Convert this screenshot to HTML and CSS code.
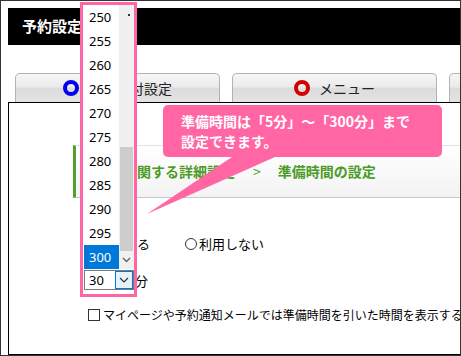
FILE: index.html
```html
<!DOCTYPE html>
<html lang="ja">
<head>
  <meta charset="UTF-8" />
  <meta name="viewport" content="width=device-width, initial-scale=1.0" />
  <title>予約設定</title>
  <link rel="stylesheet" href="styles.css">
</head>
<body>
  <div class="frame">
    <header class="topbar">予約設定</header>

    <nav class="tabs">
      <div class="tab"><span class="ring ring-blue"></span>予約受付設定</div>
      <div class="tab"><span class="ring ring-red"></span>メニュー</div>
      <div class="tab"></div>
    </nav>

    <main class="panel">
      <div class="crumb">
        <span>予約に関する詳細設定</span><span class="sep">&gt;</span><span>準備時間の設定</span>
      </div>

      <div class="radios">
        <label class="opt"><span class="radio"></span>利用する</label>
        <label class="opt opt-off"><span class="radio"></span>利用しない</label>
      </div>

      <div class="time-row">
        <div class="select">
          <span>30</span>
          <span class="select-btn">
            <svg width="10" height="6" viewBox="0 0 10 6"><path d="M1 1 L5 5 L9 1" fill="none" stroke="#333" stroke-width="1.2"/></svg>
          </span>
        </div>
        <span class="unit">分</span>
      </div>

      <div class="check-row">
        <span class="checkbox"></span>マイページや予約通知メールでは準備時間を引いた時間を表示する
      </div>
    </main>

    <!-- open list of the select -->
    <div class="droplist">
      <ul class="options">
        <li>250</li>
        <li>255</li>
        <li>260</li>
        <li>265</li>
        <li>270</li>
        <li>275</li>
        <li>280</li>
        <li>285</li>
        <li>290</li>
        <li>295</li>
        <li class="selected">300</li>
      </ul>
      <div class="scrollbar">
        <span class="scroll-dot"></span>
        <span class="thumb"></span>
        <span class="scroll-down">
          <svg width="9" height="6" viewBox="0 0 9 6"><path d="M1 1 L4.5 4.5 L8 1" fill="none" stroke="#606060" stroke-width="1.3"/></svg>
        </span>
      </div>
    </div>
    <div class="mark"></div>

    <svg class="tail" width="461" height="356" viewBox="0 0 461 356">
      <polygon points="146,213 241.4,149 289.7,149" fill="#ff66a3"/>
    </svg>
    <div class="balloon">準備時間は「5分」～「300分」まで<br>設定できます。</div>
  </div>
</body>
</html>
```

FILE: styles.css
```css
* {
  margin: 0;
  padding: 0;
  box-sizing: border-box;
}

body {
  background: #fff;
  font-family: "Noto Sans", "Noto Sans CJK JP", sans-serif;
  color: #000;
}

.frame {
  position: relative;
  width: 461px;
  height: 356px;
  border: 1px solid #333;
  overflow: hidden;
  display: flex;
  flex-direction: column;
}

.topbar {
  margin: 7px 0 0 7px;
  height: 37px;
  flex: none;
  background: #000;
  color: #fff;
  font-size: 15px;
  font-weight: bold;
  line-height: 37px;
  padding-left: 14px;
  white-space: nowrap;
}

/* tabs */
.tabs {
  display: flex;
  gap: 12px;
  margin-top: 28px;
  padding-left: 14px;
  flex: none;
}

.tab {
  flex: none;
  width: 205px;
  height: 29px;
  border: 1px solid #b2b2b2;
  border-bottom: none;
  border-radius: 5px 5px 0 0;
  background: linear-gradient(#f6f6f6 0%, #ebebeb 45%, #dcdcdc 52%, #e3e3e3 100%);
  display: flex;
  align-items: center;
  justify-content: center;
  gap: 9px;
  font-size: 14px;
  color: #222;
  white-space: nowrap;
}

.ring {
  width: 16px;
  height: 16px;
  border-radius: 50%;
  border: 4px solid;
}

.ring-blue { border-color: #0000f0; }
.ring-red { border-color: #d20000; }

/* main panel */
.panel {
  flex: 1;
  margin-left: 7px;
  border-top: 1px solid #000;
  border-left: 1px solid #000;
  border-bottom: 1px solid #000;
  font-family: "Noto Sans CJK JP", sans-serif;
}

.crumb {
  margin: 42px 0 0 64px;
  height: 53px;
  border-left: 3px solid #55a02a;
  border-top: 1px solid #e2e2e2;
  border-bottom: 1px solid #c8c8c8;
  background: linear-gradient(#ffffff, #f3f3f3);
  padding-left: 19px;
  font-size: 14px;
  font-weight: bold;
  line-height: 51px;
  color: #4b9b26;
  white-space: nowrap;
}

.crumb .sep {
  margin: 0 17px 0 18px;
  font-weight: normal;
}

.radios {
  display: flex;
  margin-top: 36px;
  padding-left: 75px;
  font-size: 13px;
  line-height: 20px;
}

.opt {
  display: flex;
  align-items: center;
  gap: 2px;
}

.opt-off {
  margin-left: 35px;
}

.radio {
  width: 12px;
  height: 12px;
  border: 1px solid #333;
  border-radius: 50%;
  background: #fff;
}

.time-row {
  display: flex;
  align-items: center;
  margin-top: 16px;
  padding-left: 75px;
  font-size: 13px;
}

.select {
  width: 50px;
  height: 20px;
  border: 1px solid #7a7a7a;
  background: #fff;
  display: flex;
  align-items: center;
  justify-content: space-between;
  padding-left: 4px;
  font-family: "Noto Sans", sans-serif;
  line-height: 18px;
}

.select-btn {
  width: 18px;
  height: 18px;
  border: 1px solid #0078d7;
  background: #e5f1fb;
  display: flex;
  align-items: center;
  justify-content: center;
}

.unit {
  margin-left: 1px;
}

.check-row {
  display: flex;
  align-items: center;
  margin-top: 15px;
  padding-left: 79px;
  font-size: 12px;
  line-height: 20px;
  white-space: nowrap;
}

.checkbox {
  flex: none;
  width: 12px;
  height: 12px;
  border: 1px solid #333;
  margin-right: 3px;
}

/* open dropdown list */
.droplist {
  position: absolute;
  left: 82px;
  top: 4px;
  width: 51px;
  height: 264px;
  background: #fff;
  display: flex;
}

.options {
  list-style: none;
  width: 36px;
  font-size: 13px;
  line-height: 24px;
}

.options li {
  height: 24px;
  padding-left: 6px;
}

.options li.selected {
  background: #0078d7;
  color: #fff;
  margin-left: 1px;
  padding-left: 5px;
}

.scrollbar {
  position: relative;
  width: 15px;
  background: #f0f0f0;
}

.scroll-dot {
  position: absolute;
  left: 9px;
  top: 9px;
  width: 2px;
  height: 2px;
  background: #333;
}

.thumb {
  position: absolute;
  left: 1px;
  right: 1px;
  top: 142px;
  height: 104px;
  background: #cdcdcd;
}

.scroll-down {
  position: absolute;
  left: 0;
  right: 0;
  bottom: 0;
  height: 18px;
  display: flex;
  align-items: center;
  justify-content: center;
}

.mark {
  position: absolute;
  left: 79px;
  top: 1px;
  width: 57px;
  height: 295px;
  border: 3px solid #ff66a3;
}

/* callout */
.tail {
  position: absolute;
  left: 0;
  top: 0;
}

.balloon {
  position: absolute;
  left: 162px;
  top: 104px;
  width: 279px;
  height: 52px;
  border-radius: 5px;
  background: #ff66a3;
  color: #fff;
  font-family: "Noto Sans CJK JP", sans-serif;
  font-size: 14px;
  font-weight: bold;
  line-height: 20px;
  padding: 6px 0 0 18px;
  white-space: nowrap;
}
```
